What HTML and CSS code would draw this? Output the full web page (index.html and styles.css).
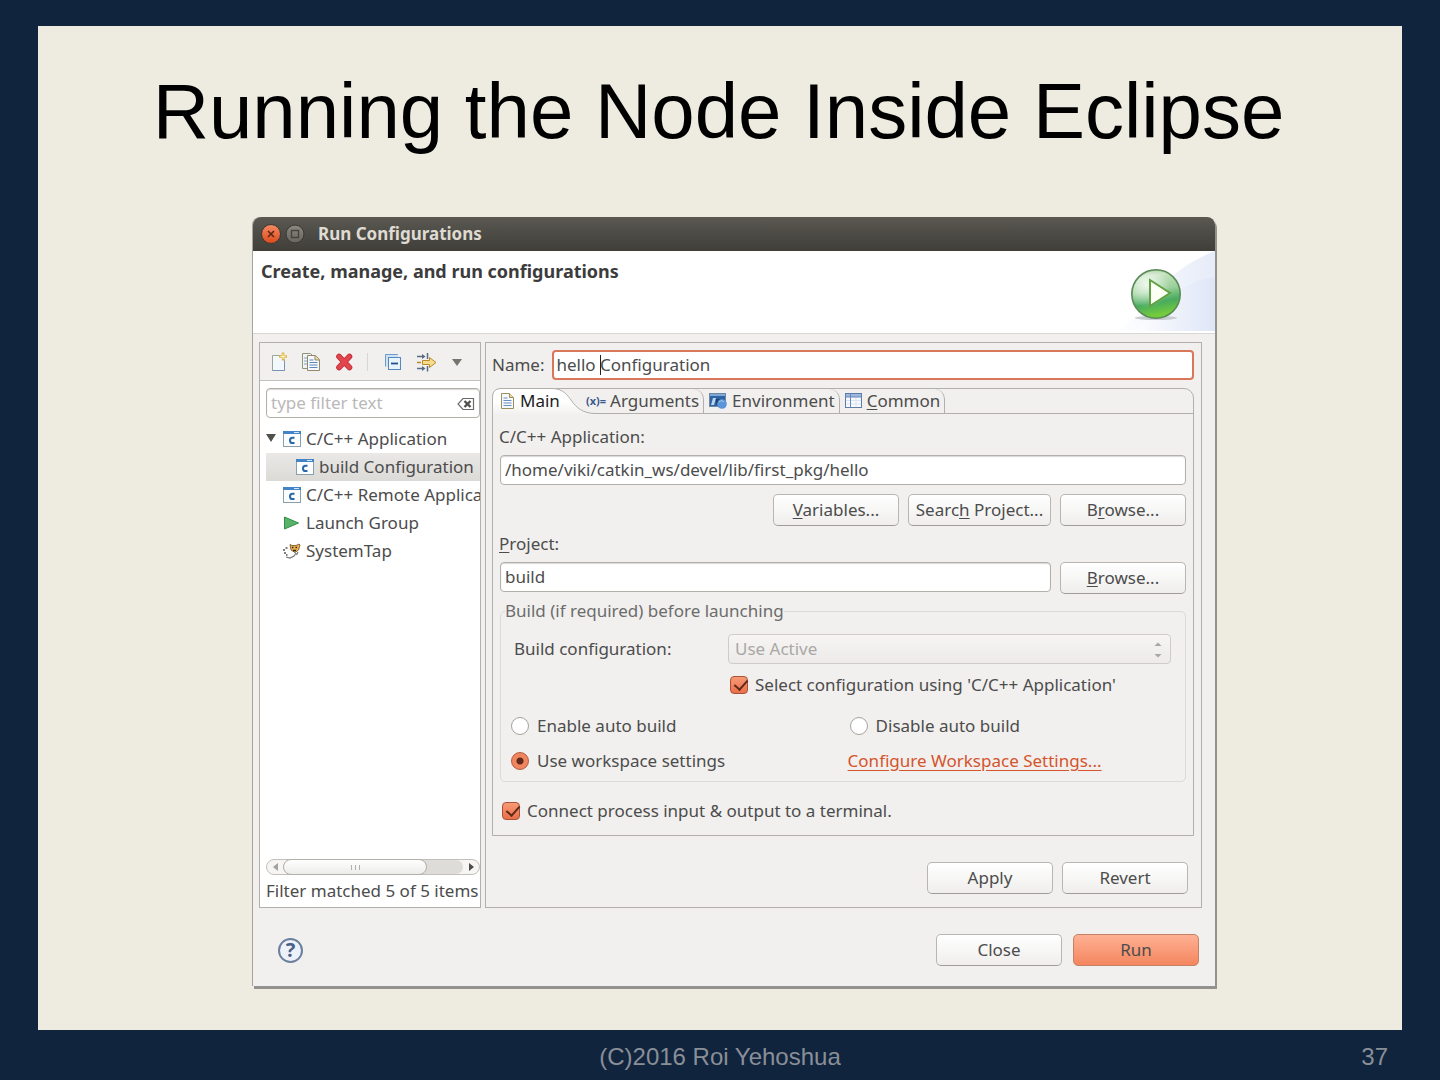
FILE: index.html
```html
<!DOCTYPE html>
<html lang="en">
<head>
    <meta charset="UTF-8">
    <meta name="viewport" content="width=device-width, initial-scale=1.0">
    <title>Running the Node Inside Eclipse</title>
    <link rel="stylesheet" href="styles.css">
</head>
<body>
    <main class="slide">
        <h1 class="slide-title">Running the Node Inside Eclipse</h1>

        <section class="dialog">
            <div class="titlebar">
                <button class="win-btn" aria-label="Close window">
                    <svg width="20" height="20" viewBox="0 0 20 20">
                        <defs><linearGradient id="closeGrad" x1="0" y1="0" x2="0" y2="1"><stop offset="0" stop-color="#f58a63"/><stop offset="1" stop-color="#dc4a1c"/></linearGradient></defs>
                        <circle cx="10" cy="10" r="9.500" fill="url(#closeGrad)" stroke="#3a3833"/>
                        <path d="M7 7l6 6M13 7l-6 6" stroke="#5c2413" stroke-width="1.6"/>
                    </svg>
                </button>
                <button class="win-btn" aria-label="Maximize">
                    <svg width="20" height="20" viewBox="0 0 20 20">
                        <defs><linearGradient id="maxGrad" x1="0" y1="0" x2="0" y2="1"><stop offset="0" stop-color="#8b8880"/><stop offset="1" stop-color="#67655e"/></linearGradient></defs>
                        <circle cx="10" cy="10" r="9" fill="url(#maxGrad)" stroke="#3a3833"/>
                        <rect x="6.5" y="6.5" width="7" height="7" fill="none" stroke="#45433d" stroke-width="1.4"/>
                    </svg>
                </button>
                <span class="titlebar-text">Run Configurations</span>
            </div>

            <header class="banner">
                <h2 class="banner-title">Create, manage, and run configurations</h2>
                <svg class="banner-art" width="120" height="80" viewBox="0 0 120 80">
                    <defs>
                        <linearGradient id="sweep" x1="0" y1="0" x2="1" y2="0"><stop offset="0" stop-color="#fff"/><stop offset="1" stop-color="#dbe3f6"/></linearGradient>
                        <linearGradient id="ball" x1="0" y1="0" x2="0.2" y2="1"><stop offset="0" stop-color="#86b680"/><stop offset="0.2" stop-color="#c3e2bd"/><stop offset="0.5" stop-color="#9bd09a"/><stop offset="0.75" stop-color="#48ab5e"/><stop offset="1" stop-color="#74cc3c"/></linearGradient>
                        <radialGradient id="shine" cx="0.3" cy="0.3" r="0.5"><stop offset="0" stop-color="#fff" stop-opacity="0.8"/><stop offset="1" stop-color="#fff" stop-opacity="0"/></radialGradient>
                    </defs>
                    <path d="M20 80C55 62 62 22 120 0V80Z" fill="url(#sweep)" opacity="0.7"/>
                    <path d="M40 80C66 52 88 30 120 26V80Z" fill="url(#sweep)" opacity="0.7"/>
                    <ellipse cx="61" cy="67" rx="21" ry="2" fill="#c9cdd0"/>
                    <circle cx="61" cy="43" r="24.2" fill="url(#ball)" stroke="#5c8a58" stroke-width="1.6"/>
                    <circle cx="61" cy="43" r="23" fill="url(#shine)"/>
                    <path d="M55 29V55L75 42Z" fill="#fbfff4" stroke="#62a044" stroke-width="2"/>
                </svg>
            </header>

            <div class="dialog-body">
                <aside class="panel sidebar">
                    <div class="toolbar">
                        <button class="tool" aria-label="New">
                            <svg width="18" height="20" viewBox="0 0 18 20"><path d="M2.5 3.5h8l4 4v11h-12z" fill="#f2f8fd" stroke="#9aa694"/><path d="M2.5 18.500h12v-9" fill="none" stroke="#7693b5"/><path d="M13 0.500v8M9 4.500h8" stroke="#dfb84c" stroke-width="2.600"/><path d="M13 2v5M10.500 4.500h5" stroke="#fff3bf"/></svg>
                        </button>
                        <button class="tool" aria-label="Duplicate">
                            <svg width="20" height="20" viewBox="0 0 20 20"><path d="M1.500 1.500h8l3 3v12h-11z" fill="#eff4f7" stroke="#8f957c"/><path d="M3 6h4M3 9h4M3 12h4" stroke="#87a3c6"/><path d="M6.500 3.500h8l4 4v11h-12z" fill="#f5f9fd" stroke="#93886a"/><path d="M14 3.500v4.500h4.500" fill="#f0dca0" stroke="#93886a"/><path d="M8.500 8h4M8.500 10.500h8M8.500 13h8M8.500 15.500h8" stroke="#5e84b8"/></svg>
                        </button>
                        <button class="tool" aria-label="Delete">
                            <svg width="20" height="20" viewBox="0 0 20 20"><path d="M5 4.500l10.500 11M15.500 4.500L5 15.500" stroke="#bd2c35" stroke-width="5.600" stroke-linecap="round"/><path d="M5 4.500l10.500 11M15.500 4.500L5 15.500" stroke="#e2454d" stroke-width="4" stroke-linecap="round"/></svg>
                        </button>
                        <span class="tool-sep"></span>
                        <button class="tool" aria-label="Collapse All">
                            <svg width="20" height="20" viewBox="0 0 20 20"><path d="M2.500 14.500v-12h12v2" fill="none" stroke="#6d9bcb"/><path d="M3 3h12v3H6v9H3z" fill="#cfe2f2"/><rect x="5.500" y="5.500" width="12" height="12" fill="#eaf4fc" stroke="#5588bc"/><path d="M8 11.500h7" stroke="#21558f" stroke-width="1.800"/></svg>
                        </button>
                        <button class="tool" aria-label="Filter">
                            <svg width="22" height="20" viewBox="0 0 22 20"><path d="M1 4.500h7M1 16.500h7" stroke="#5a6c84" stroke-width="1.500"/><path d="M6 2l3.500 2.500L6 7M6 14l3.500 2.500L6 19" fill="#5a6c84"/><path d="M11.500 1v6M11.500 14v5.500" stroke="#5a6c84" stroke-width="1.500"/><path d="M6.500 8.500h7V5.500l6.500 5-6.500 5v-3h-7z" fill="#f8dc8e" stroke="#b98a29"/><path d="M1 10.500h4" stroke="#b98a29" stroke-width="1.500"/></svg>
                        </button>
                        <button class="tool" aria-label="View Menu">
                            <svg width="12" height="20" viewBox="0 0 12 20"><path d="M1 7h10l-5 7z" fill="#77756f"/></svg>
                        </button>
                    </div>

                    <div class="filter">
                        <input class="field filter-input" type="text" placeholder="type filter text" aria-label="Filter">
                        <svg class="filter-clear" width="18" height="14" viewBox="0 0 18 14"><path d="M6 1.500h10.500v11H6L1 7z" fill="#fff" stroke="#6a6a68" stroke-width="1.200"/><path d="M7.500 4l6 6M13.500 4l-6 6" stroke="#4f4f4d" stroke-width="2.400"/></svg>
                    </div>

                    <ul class="tree">
                        <li class="tree-item">
                            <svg class="twisty" width="10" height="10" viewBox="0 0 10 10"><path d="M0 1h10L5 9z" fill="#50504d"/></svg>
                            <svg class="tree-icon" width="18" height="18" viewBox="0 0 18 18"><rect x="0.500" y="1.500" width="17" height="15" fill="#fbfdff" stroke="#8aa0ac"/><path d="M0 1h18v3H0z" fill="#4584c4"/><path d="M11 2.500h5" stroke="#d6e8f7"/><path d="M11.500 7.700h-2a2.500 2.700 0 0 0 0 5.400h2" fill="none" stroke="#2867a8" stroke-width="2"/></svg>
                            C/C++ Application
                        </li>
                        <li class="tree-item child selected">
                            <svg class="tree-icon" width="18" height="18" viewBox="0 0 18 18"><rect x="0.500" y="1.500" width="17" height="15" fill="#fbfdff" stroke="#8aa0ac"/><path d="M0 1h18v3H0z" fill="#4584c4"/><path d="M11 2.500h5" stroke="#d6e8f7"/><path d="M11.500 7.700h-2a2.500 2.700 0 0 0 0 5.400h2" fill="none" stroke="#2867a8" stroke-width="2"/></svg>
                            build Configuration
                        </li>
                        <li class="tree-item">
                            <svg class="tree-icon" width="18" height="18" viewBox="0 0 18 18"><rect x="0.500" y="1.500" width="17" height="15" fill="#fbfdff" stroke="#8aa0ac"/><path d="M0 1h18v3H0z" fill="#4584c4"/><path d="M11 2.500h5" stroke="#d6e8f7"/><path d="M11.500 7.700h-2a2.500 2.700 0 0 0 0 5.400h2" fill="none" stroke="#2867a8" stroke-width="2"/></svg>
                            C/C++ Remote Application
                        </li>
                        <li class="tree-item">
                            <svg class="tree-icon" width="18" height="18" viewBox="0 0 18 18"><path d="M1.500 3v12l14-6z" fill="#58b368" stroke="#2f9145"/></svg>
                            Launch Group
                        </li>
                        <li class="tree-item">
                            <svg class="tree-icon" width="18" height="18" viewBox="0 0 18 18"><path d="M7 2.500l2 1h4l3-1.500 1 1-1.500 5-3.500 2.500-4-2.500z" fill="#f0b04c" stroke="#6b4c20" stroke-width="0.800"/><path d="M9 5.500h1.500M12.500 5.500H14M10 8.500h3" stroke="#2e251a" stroke-width="1.500"/><path d="M13 11l-2 3-4 2-4-1M15 10l-1.500 3" fill="none" stroke="#777" stroke-width="1.200"/><path d="M0 8h2M2.500 6h2M1 11h2M3 13h1.500" stroke="#555" stroke-width="1.500"/></svg>
                            SystemTap
                        </li>
                    </ul>

                    <div class="scrollbar">
                        <svg class="scroll-arrow" width="16" height="16" viewBox="0 0 16 16"><path d="M11 4v8L6 8z" fill="#a3a19d"/></svg>
                        <div class="scroll-track"><div class="scroll-thumb"><i></i><i></i><i></i></div></div>
                        <svg class="scroll-arrow" width="16" height="16" viewBox="0 0 16 16"><path d="M6 4v8l5-4z" fill="#4c4c49"/></svg>
                    </div>
                    <p class="filter-status">Filter matched 5 of 5 items</p>
                </aside>

                <section class="panel editor">
                    <div class="name-row">
                        <label for="name">Name:</label>
                        <div class="name-box">
                            <input class="field focused" id="name" type="text" value="hello Configuration">
                            <span class="caret"></span>
                        </div>
                    </div>

                    <div class="tab-folder">
                        <div class="tabs" role="tablist">
                            <button class="tab active" role="tab" aria-selected="true">
                                <svg class="tab-shape" width="104" height="27" viewBox="0 0 104 27"><defs><linearGradient id="tabFill" x1="0" y1="0" x2="0" y2="1"><stop offset="0.5" stop-color="#fff"/><stop offset="1" stop-color="#f1f0ee"/></linearGradient></defs><path d="M0.500 27V9Q0.500 0.500 9 0.500H60C82 0.500 76 25.500 104 25.500V27Z" fill="url(#tabFill)"/><path d="M0.500 27V9Q0.500 0.500 9 0.500H60C82 0.500 76 25.500 104 25.500" fill="none" stroke="#b3b0ab"/></svg>
                                <svg class="tab-icon" width="16" height="18" viewBox="0 0 16 18"><path d="M1.500 1.500h8l4 4v11h-12z" fill="#f5f9fd" stroke="#9a8f5c"/><path d="M9.500 1.500v4h4" fill="#f0dca0" stroke="#9a8f5c"/><path d="M3.500 6h4M3.500 8.500h8M3.500 11h8M3.500 13.500h8" stroke="#6b8fc0"/></svg>
                                <span class="tab-text">Main</span>
                            </button>
                            <button class="tab" role="tab">
                                <span class="args-icon">(x)=</span>
                                Arguments
                            </button>
                            <button class="tab" role="tab">
                                <svg class="tab-icon" width="19" height="18" viewBox="0 0 19 18"><rect x="0.500" y="1.500" width="16" height="13" fill="#2f64a4" stroke="#6d87a5"/><path d="M1 2h15v2H1z" fill="#7fa8d6"/><path d="M2 13l2-7h3l-2 7z" fill="#bcd4ec"/><path d="M7 7h4l-4 6z" fill="#1d3f70"/><circle cx="13" cy="12" r="4.800" fill="#5b95d8"/><path d="M10 10q3-3 5 0" fill="none" stroke="#a8ccf0"/></svg>
                                Environment
                            </button>
                            <button class="tab" role="tab">
                                <svg class="tab-icon" width="18" height="18" viewBox="0 0 18 18"><rect x="0.500" y="1.500" width="16" height="14" fill="#f6f9fd" stroke="#5d7dab"/><path d="M1 2h15v3H1z" fill="#9db8dc"/><path d="M11 5v10M1 8.500h15M1 12h15" stroke="#dbe4f1"/><path d="M5.500 2v13.500M0.500 5h16" stroke="#6b88b5"/></svg>
                                <span><u>C</u>ommon</span>
                            </button>
                        </div>

                        <div class="tab-page">
                            <label class="line-label" for="app">C/C++ Application:</label>
                            <input class="field" id="app" type="text" value="/home/viki/catkin_ws/devel/lib/first_pkg/hello">
                            <div class="btn-row app-buttons">
                                <button class="btn"><u>V</u>ariables...</button>
                                <button class="btn wide">Searc<u>h</u> Project...</button>
                                <button class="btn">B<u>r</u>owse...</button>
                            </div>

                            <label class="line-label" for="project"><u>P</u>roject:</label>
                            <div class="btn-row">
                                <input class="field" id="project" type="text" value="build">
                                <button class="btn"><u>B</u>rowse...</button>
                            </div>

                            <fieldset class="group">
                                <legend>Build (if required) before launching</legend>
                                <div class="config-row">
                                    <label for="buildConfig">Build configuration:</label>
                                    <div class="select-box">
                                        <select class="combo" id="buildConfig" disabled>
                                            <option>Use Active</option>
                                        </select>
                                        <svg class="combo-arrows" width="8" height="16" viewBox="0 0 8 16"><path d="M0.500 4h7L4 0.500zM0.500 12h7L4 15.500z" fill="#aaa7a2"/></svg>
                                    </div>
                                    <label class="option using"><input class="check" type="checkbox" checked>Select configuration using 'C/C++ Application'</label>
                                </div>
                                <div class="radio-grid">
                                    <label class="option"><input class="radio" type="radio" name="autobuild">Enable auto build</label>
                                    <label class="option disable"><input class="radio" type="radio" name="autobuild">Disable auto build</label>
                                    <label class="option"><input class="radio" type="radio" name="autobuild" checked>Use workspace settings</label>
                                    <a class="settings-link" href="#">Configure Workspace Settings...</a>
                                </div>
                            </fieldset>

                            <label class="option terminal"><input class="check" type="checkbox" checked>Connect process input &amp; output to a terminal.</label>
                        </div>
                    </div>

                    <div class="btn-row editor-buttons">
                        <button class="btn">Apply</button>
                        <button class="btn">Revert</button>
                    </div>
                </section>
            </div>

            <footer class="dialog-footer">
                <button class="help" aria-label="Help">?</button>
                <button class="btn">Close</button>
                <button class="btn primary">Run</button>
            </footer>
        </section>
    </main>

    <footer class="slide-footer">
        <span class="copyright">(C)2016 Roi Yehoshua</span>
        <span class="page-number">37</span>
    </footer>
</body>
</html>
```
FILE: styles.css
```css
* {
    box-sizing: border-box;
}
body {
    margin: 0;
    min-height: 100vh;
    padding: 26px 38px 0;
    display: flex;
    flex-direction: column;
    background: #10243e;
    font-family: "Noto Sans", "Open Sans", sans-serif;
    font-size: 17px;
    line-height: 24px;
    color: #4c4c4c;
}
button, input, select {
    font: inherit;
    color: inherit;
}
button {
    padding: 0;
    border: 0;
    background: none;
}
u {
    text-underline-offset: 2px;
}

/* slide */
.slide {
    flex: 1;
    padding: 40px 187px 40px 214px;
    background: #eeece1;
}
.slide-title {
    margin: 0 -120px 61px -150px;
    font-family: "Liberation Sans", Arial, sans-serif;
    font-size: 78px;
    line-height: 90px;
    font-weight: normal;
    text-align: center;
    white-space: nowrap;
    color: #000;
}
.slide-footer {
    height: 50px;
    padding: 4px 14px 0;
    display: grid;
    grid-template-columns: 1fr auto 1fr;
    align-items: center;
    font-family: "Liberation Sans", Arial, sans-serif;
    font-size: 24px;
    color: #8a8f97;
}
.copyright {
    grid-column: 2;
}
.page-number {
    text-align: right;
}

/* dialog window */
.dialog {
    border-left: 1px solid #a5a39e;
    border-radius: 8px 8px 0 0;
    background: #f1f0ee;
    box-shadow: 2px 3px 0 #93928f;
}
.titlebar {
    height: 34px;
    padding: 0 8px;
    display: flex;
    align-items: center;
    gap: 4px;
    border-radius: 8px 8px 0 0;
    background: linear-gradient(#5a5851, #3f3e39);
}
.win-btn {
    width: 20px;
    height: 20px;
    display: flex;
}
.titlebar-text {
    margin-left: 9px;
    font-size: 17px;
    font-weight: bold;
    color: #dfdbd2;
}
.banner {
    height: 83px;
    display: flex;
    justify-content: space-between;
    border-bottom: 1px solid #d9d7d4;
    background: #fff;
}
.banner-title {
    margin: 8px;
    font-size: 18px;
    line-height: 24px;
    color: #3c3c3c;
}
.dialog-body {
    padding: 8px 13px 0 6px;
    display: flex;
    gap: 4px;
}
.panel {
    height: 566px;
    border: 1px solid #b3b0ab;
}

/* left side */
.sidebar {
    flex: 0 0 222px;
    display: flex;
    flex-direction: column;
    overflow: hidden;
    background: #fff;
}
.toolbar {
    height: 38px;
    padding: 0 10px;
    display: flex;
    align-items: center;
    gap: 13px;
    border-bottom: 1px solid #c2c0bc;
    background: #f1f0ee;
}
.tool {
    height: 20px;
    display: flex;
}
.tool-sep {
    width: 1px;
    height: 18px;
    margin-right: 2px;
    background: #d9d7d4;
}
.filter {
    position: relative;
    margin: 7px 0 7px 6px;
}
.filter-input::placeholder {
    color: #b9b9b9;
}
.filter-clear {
    position: absolute;
    top: 9px;
    right: 5px;
}
.tree {
    flex: 1;
    margin: 0 0 0 6px;
    padding: 0;
    list-style: none;
}
.tree-item {
    position: relative;
    height: 28px;
    padding-left: 17px;
    display: flex;
    align-items: center;
    gap: 5px;
    white-space: nowrap;
}
.tree-item.child {
    padding-left: 30px;
}
.tree-item.selected {
    background: linear-gradient(#e9e8e6, #dcdad7);
}
.tree-icon {
    flex: none;
}
.twisty {
    position: absolute;
    left: 0;
    top: 8px;
}
.scrollbar {
    height: 16px;
    margin: 0 0 4px 6px;
    display: flex;
    border: 1px solid #c2c0bc;
    border-radius: 8px;
    background: #f6f5f4;
}
.scroll-arrow {
    flex: none;
    margin-top: -1px;
}
.scroll-track {
    flex: 1;
    border-radius: 8px;
    background: #dddcd8;
}
.scroll-thumb {
    width: 80%;
    height: 16px;
    margin-top: -1px;
    display: flex;
    justify-content: center;
    align-items: center;
    gap: 3px;
    border: 1px solid #b3b0ab;
    border-radius: 8px;
    background: linear-gradient(#fff, #ececea);
}
.scroll-thumb i {
    width: 1px;
    height: 5px;
    background: #b3b0ab;
}
.filter-status {
    margin: 0 0 4px 6px;
    white-space: nowrap;
}

/* right side */
.editor {
    flex: 1;
    padding: 7px 7px 0 6px;
}
.field {
    width: 100%;
    height: 30px;
    padding: 0 4px 1px;
    display: block;
    border: 1px solid #b3b0ab;
    border-radius: 4px;
    outline: 0;
    background: #fff;
    box-shadow: inset 0 1px 1px #d9d7d4;
}
.field.focused {
    border: 2px solid #d9775a;
    padding: 0 3px 1px;
    box-shadow: none;
}
.name-row {
    margin-bottom: 8px;
    display: flex;
    align-items: center;
    gap: 7px;
}
.name-box {
    position: relative;
    flex: 1;
}
.caret {
    position: absolute;
    top: 5px;
    left: 48px;
    width: 1px;
    height: 20px;
    background: #222;
}
.tab-folder {
    height: 448px;
    border: 1px solid #b3b0ab;
    border-radius: 10px 10px 0 0;
}
.tabs {
    height: 25px;
    display: flex;
    border-bottom: 1px solid #b3b0ab;
}
.tab {
    position: relative;
    height: 24px;
    padding: 0 4px 0 5px;
    display: flex;
    align-items: center;
    gap: 4px;
    border-right: 1px solid #b3b0ab;
    border-top-right-radius: 10px;
}
.tab.active {
    width: 88px;
    padding-left: 7px;
    border: 0;
    color: #1c1c1c;
}
.tab-shape {
    position: absolute;
    top: -1px;
    left: -1px;
}
.tab-icon, .tab-text {
    position: relative;
    flex: none;
}
.args-icon {
    font-size: 11px;
    font-weight: bold;
    color: #3d5a8c;
}
.tab-page {
    padding: 11px 7px 0;
}
.line-label {
    display: block;
    margin: 0 -1px 6px;
}
.btn-row {
    display: flex;
    gap: 9px;
}
.app-buttons {
    margin: 9px 0 6px;
    justify-content: flex-end;
}
.btn {
    flex: none;
    width: 126px;
    height: 32px;
    border: 1px solid #b9b6b1;
    border-bottom-color: #a09d98;
    border-radius: 5px;
    background: linear-gradient(#fff, #efeeec);
}
.btn.wide {
    width: 143px;
}
.btn.primary {
    border-color: #c48266;
    background: linear-gradient(#ffb093, #f3865f);
}
.group {
    height: 183px;
    margin: 5px 0 0;
    padding: 11px 14px 0 10px;
    border: 1px solid #dcdad7;
    border-radius: 5px;
}
.group legend {
    margin-left: -6px;
    padding: 0;
    color: #6c6c6c;
}
.config-row {
    padding-left: 3px;
    display: grid;
    grid-template-columns: 214px 1fr;
    align-items: center;
}
.select-box {
    position: relative;
}
.combo {
    width: 100%;
    height: 30px;
    padding: 0 6px;
    display: block;
    appearance: none;
    border: 1px solid #cfccc8;
    border-radius: 4px;
    background: linear-gradient(#f6f5f4, #ecebe9);
    color: #aaa8a5;
    opacity: 1;
}
.combo-arrows {
    position: absolute;
    top: 8px;
    right: 9px;
}
.option {
    display: flex;
    align-items: center;
    gap: 8px;
    white-space: nowrap;
}
.using {
    grid-column: 2;
    margin: 9px 0 0 2px;
    gap: 7px;
}
.check, .radio {
    flex: none;
    width: 18px;
    height: 18px;
    margin: 0;
    appearance: none;
    border: 1px solid #a5a39e;
    border-radius: 50%;
    background: #fff;
}
.check {
    position: relative;
    border-radius: 4px;
    border-color: #a85335;
    background: linear-gradient(#f79a76, #ea6f49);
}
.check::after {
    content: "";
    position: absolute;
    top: 0;
    left: 6px;
    width: 6px;
    height: 11px;
    border: solid #5e2a1a;
    border-width: 0 2px 2px 0;
    transform: rotate(42deg);
}
.radio:checked {
    border-color: #b05a3c;
    background: radial-gradient(circle, #5e2a1a 3px, #f08560 4px);
}
.radio-grid {
    margin-top: 17px;
    display: grid;
    grid-template-columns: 51% 49%;
    row-gap: 11px;
}
.disable {
    padding-left: 2px;
}
.settings-link {
    color: #d4542c;
    text-underline-offset: 3px;
}
.terminal {
    margin: 17px 0 0 2px;
    gap: 7px;
}
.editor-buttons {
    margin: 26px 6px 0 0;
    justify-content: flex-end;
}

/* bottom bar */
.dialog-footer {
    padding: 26px 16px 20px 25px;
    display: flex;
    align-items: center;
    gap: 11px;
}
.help {
    width: 25px;
    height: 25px;
    margin-right: auto;
    border: 2px solid #6b7f9e;
    border-radius: 50%;
    background: #edf2fa;
    font-size: 20px;
    line-height: 20px;
    font-weight: bold;
    color: #4a6087;
}
```
